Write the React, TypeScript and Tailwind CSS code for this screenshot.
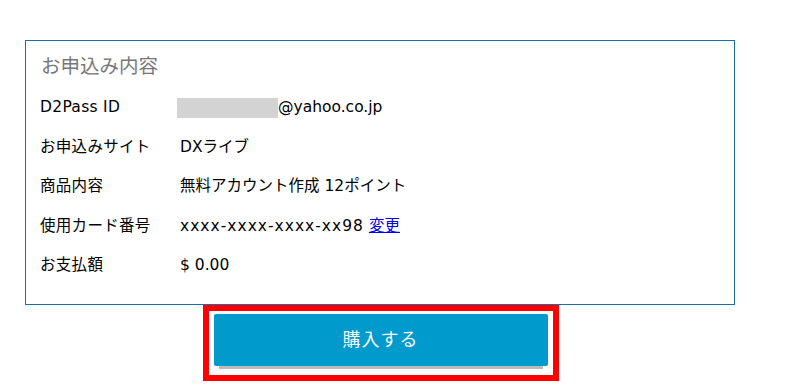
const font = {
  fontFamily: '"DejaVu Sans", "Noto Sans CJK JP", sans-serif',
}

type Row = { label: string; value: React.ReactNode }

const rows: Row[] = [
  {
    label: "D2Pass ID",
    value: (
      <span className="flex items-center">
        <span className="-ml-[3px] inline-block h-[20px] w-[101px] bg-[#d3d3d3]" />
        <span>@yahoo.co.jp</span>
      </span>
    ),
  },
  { label: "お申込みサイト", value: "DXライブ" },
  { label: "商品内容", value: "無料アカウント作成 12ポイント" },
  {
    label: "使用カード番号",
    value: (
      <span>
        <span className="tracking-[1px]">xxxx-xxxx-xxxx-xx98</span>{" "}
        <a href="#" className="text-[#0000ee] underline">
          変更
        </a>
      </span>
    ),
  },
  { label: "お支払額", value: "$ 0.00" },
]

export default function App() {
  return (
    <div className="min-h-[389px] bg-white pt-[40px]" style={font}>
      <div className="ml-[25px] w-[710px]">
        <div className="border border-[#1b6fa6] px-[14px] pb-[18px] pt-[5px]">
          <h2 className="flex h-[42px] items-center pl-px text-[19.5px] font-normal text-[#777]">
            お申込み内容
          </h2>
          {rows.map((r) => (
            <div
              key={r.label}
              className="flex h-[39.5px] items-center text-[15.5px] text-black"
            >
              <div className="w-[140px] shrink-0 tracking-[0.3px]">{r.label}</div>
              <div>{r.value}</div>
            </div>
          ))}
        </div>

        <div className="flex justify-center pl-px">
          <div className="border-[6px] border-[#ff0000] px-[5px] pb-[9px] pt-[3px]">
            <button
              type="button"
              className="flex h-[52px] w-[334px] items-center justify-center rounded-[2px] bg-[#009acc] text-[18px] tracking-[1px] text-white shadow-[0_8px_0_-5px_#bbbbbb]"
            >
              購入する
            </button>
          </div>
        </div>
      </div>
    </div>
  )
}
